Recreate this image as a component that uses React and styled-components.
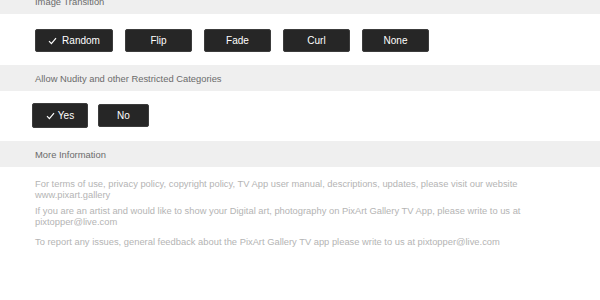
import React, { useState } from 'react';
import styled, { createGlobalStyle } from 'styled-components';

const GlobalStyle = createGlobalStyle`
  html, body {
    margin: 0;
    padding: 0;
    background: #ffffff;
    font-family: "Liberation Sans", Arial, Helvetica, sans-serif;
    overflow: hidden;
  }
`;

const transitions = ['Random', 'Flip', 'Fade', 'Curl', 'None'];

function Check() {
  return (
    <svg width='9' height='8' viewBox='0 0 9 8' fill='none'>
      <path d='M1 4.2 L3.4 6.6 L8 1.2' stroke='#fff' strokeWidth='1.2' />
    </svg>
  );
}

function App() {
  const [transition, setTransition] = useState('Random');
  const [nudity, setNudity] = useState(true);

  return (
    <>
      <GlobalStyle />
      <Page>
        <SectionHeader $first>Image Transition</SectionHeader>
        <ButtonRow $top={15} $bottom={13}>
          {transitions.map((name) => (
            <OptionButton
              key={name}
              $width={name === 'Random' ? 78 : 67}
              onClick={() => setTransition(name)}>
              {transition === name && <Check />}
              {name}
            </OptionButton>
          ))}
        </ButtonRow>

        <SectionHeader>Allow Nudity and other Restricted Categories</SectionHeader>
        <ButtonRow $top={12} $bottom={13} $gap={10} $indent={32}>
          <OptionButton
            $width={56}
            $height={25}
            $gap={3}
            onClick={() => setNudity(true)}>
            {nudity && <Check />}
            Yes
          </OptionButton>
          <OptionButton
            $width={51}
            onClick={() => setNudity(false)}>
            {!nudity && <Check />}
            No
          </OptionButton>
        </ButtonRow>

        <SectionHeader>More Information</SectionHeader>
        <InfoBlock>
          <p>
            For terms of use, privacy policy, copyright policy, TV App user manual,
            descriptions, updates, please visit our website www.pixart.gallery
          </p>
          <p>
            If you are an artist and would like to show your Digital art, photography
            on PixArt Gallery TV App, please write to us at pixtopper@live.com
          </p>
          <p>
            To report any issues, general feedback about the PixArt Gallery TV app
            please write to us at pixtopper@live.com
          </p>
        </InfoBlock>
      </Page>
    </>
  );
}

const Page = styled.div`
  width: 600px;
  height: 300px;
  display: flex;
  flex-direction: column;
`;

const SectionHeader = styled.div`
  height: 26px;
  flex-shrink: 0;
  margin-top: ${(p) => (p.$first ? '-12px' : '0')};
  display: flex;
  align-items: center;
  padding: 0 35px;
  background: #efefef;
  color: #6b6b6b;
  font-size: 9.4px;
`;

const ButtonRow = styled.div`
  display: flex;
  align-items: center;
  gap: ${(p) => p.$gap || 12}px;
  padding: ${(p) => p.$top}px 35px ${(p) => p.$bottom}px ${(p) => p.$indent || 35}px;
  background: #ffffff;
`;

const OptionButton = styled.button`
  width: ${(p) => p.$width}px;
  height: ${(p) => p.$height || 23}px;
  display: flex;
  align-items: center;
  justify-content: center;
  gap: ${(p) => p.$gap || 5}px;
  padding: 0;
  background: #262626;
  border: 1px solid #3c3c3c;
  border-radius: 2px;
  color: #ffffff;
  font-family: "Liberation Sans", Arial, Helvetica, sans-serif;
  font-size: 10px;
  cursor: pointer;
`;

const InfoBlock = styled.div`
  padding: 12px 35px 0;
  color: #b4b4b4;
  font-size: 9.35px;
  line-height: 11px;

  p {
    margin: 0 0 5px;
  }

  p:last-child {
    margin-top: 9px;
  }
`;

export default App;
